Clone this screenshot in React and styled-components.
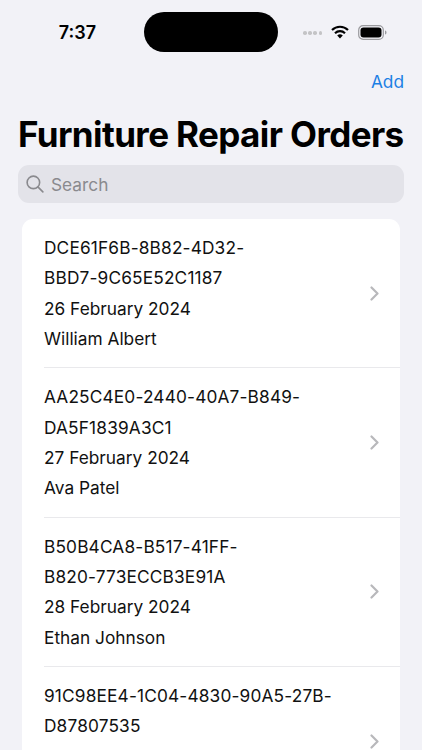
import React from 'react';
import styled, { createGlobalStyle } from 'styled-components';

const orders = [
  { id: 'DCE61F6B-8B82-4D32-BBD7-9C65E52C1187', lines: ['DCE61F6B-8B82-4D32-', 'BBD7-9C65E52C1187'], date: '26 February 2024', name: 'William Albert' },
  { id: 'AA25C4E0-2440-40A7-B849-DA5F1839A3C1', lines: ['AA25C4E0-2440-40A7-B849-', 'DA5F1839A3C1'], date: '27 February 2024', name: 'Ava Patel' },
  { id: 'B50B4CA8-B517-41FF-B820-773ECCB3E91A', lines: ['B50B4CA8-B517-41FF-', 'B820-773ECCB3E91A'], date: '28 February 2024', name: 'Ethan Johnson' },
  { id: '91C98EE4-1C04-4830-90A5-27B-D87807535', lines: ['91C98EE4-1C04-4830-90A5-27B-', 'D87807535'], date: '29 February 2024', name: '' },
];

const GlobalStyle = createGlobalStyle`
  html, body {
    margin: 0;
    height: 100%;
    overflow: hidden;
    background: #f2f2f7;
    font-family: Inter, "Liberation Sans", sans-serif;
    color: #000;
  }
`;

const Screen = styled.div`
  height: 750px;
  overflow: hidden;
  background: #f2f2f7;
`;

const StatusBar = styled.div`
  height: 64px;
  display: grid;
  grid-template-columns: 144px 134px 1fr;
  align-items: center;
`;

const Clock = styled.div`
  font-size: 18px;
  font-weight: 600;
  text-align: right;
  padding-right: 48px;
`;

const Island = styled.div`
  width: 134px;
  height: 40px;
  background: #000;
  border-radius: 20px;
`;

const StatusIcons = styled.div`
  display: flex;
  align-items: center;
  padding-left: 25px;
  gap: 9px;
`;

const Signal = styled.div`
  display: flex;
  gap: 1.7px;
  margin-top: 2px;
`;

const SignalDot = styled.span`
  width: 3.5px;
  height: 3.5px;
  border-radius: 50%;
  background: #c4c4c6;
`;

const NavBar = styled.div`
  height: 48px;
  box-sizing: border-box;
  padding: 0 18px 14px 0;
  display: flex;
  justify-content: flex-end;
  align-items: center;
`;

const AddButton = styled.button`
  border: 0;
  padding: 0;
  background: none;
  font: inherit;
  font-size: 17.3px;
  color: #1c80e4;
`;

const Title = styled.h1`
  margin: 0;
  padding: 0 18px;
  font-size: 35px;
  line-height: 44px;
  font-weight: 700;
  letter-spacing: -0.6px;
  white-space: nowrap;
`;

const SearchBar = styled.div`
  margin: 9px 18px 0;
  height: 38px;
  display: flex;
  align-items: center;
  gap: 7px;
  padding-left: 8px;
  border-radius: 11px;
  background: #e3e3e9;
  color: #8a8a8e;
  font-size: 17.3px;
`;

const List = styled.ul`
  list-style: none;
  margin: 16px 22px 0;
  padding: 0;
  background: #fff;
  border-radius: 11px 11px 0 0;
`;

const Row = styled.li`
  margin-left: 22px;
  height: 149.4px;
  box-sizing: border-box;
  display: flex;
  align-items: flex-start;
  justify-content: space-between;
  border-bottom: 1px solid #e9e9ec;
  &:last-child {
    border-bottom: 0;
  }
`;

const Details = styled.div`
  padding-top: 14px;
  font-size: 17.3px;
  line-height: 30.3px;
  color: #111;
`;

const Line = styled.div`
  white-space: nowrap;
  min-height: 30.3px;
`;

const IdLine = styled(Line)`
  letter-spacing: 0.15px;
`;

const ChevronIcon = styled.svg`
  flex: none;
  align-self: center;
  margin-right: 21px;
  fill: none;
  stroke: #b8b8bb;
  stroke-width: 2.2;
  stroke-linecap: round;
  stroke-linejoin: round;
`;

function Wifi() {
  return (
    <svg width="18" height="14" viewBox="0 0 18 14" aria-hidden="true">
      <path d="M1 5a11.5 11.5 0 0 1 16 0" fill="none" stroke="#000" strokeWidth="2.2" />
      <path d="M4 8.2a7.2 7.2 0 0 1 10 0" fill="none" stroke="#000" strokeWidth="2.2" />
      <path d="M9 13.5 6.2 10.6a4 4 0 0 1 5.6 0z" fill="#000" />
    </svg>
  );
}

function Battery() {
  return (
    <svg width="29" height="15" viewBox="0 0 29 15" aria-hidden="true">
      <rect x="0.7" y="0.7" width="24.6" height="13.6" rx="4.4" fill="none" stroke="#9a9a9e" strokeWidth="1.2" />
      <rect x="2.5" y="2.5" width="21" height="10" rx="3" fill="#000" />
      <path d="M27 5.5c1 .3 1.5 1 1.5 2s-.5 1.7-1.5 2z" fill="#9a9a9e" />
    </svg>
  );
}

function SearchIcon() {
  return (
    <svg width="18" height="18" viewBox="0 0 19 19" fill="none" stroke="#8a8a8e" strokeWidth="1.7" strokeLinecap="round" aria-hidden="true">
      <circle cx="7.8" cy="7.8" r="6.6" />
      <path d="m12.8 12.8 5 5" />
    </svg>
  );
}

export default function App() {
  return (
    <Screen>
      <GlobalStyle />
      <StatusBar>
        <Clock>7:37</Clock>
        <Island />
        <StatusIcons>
          <Signal>
            {[0, 1, 2, 3].map((dot) => <SignalDot key={dot} />)}
          </Signal>
          <Wifi />
          <Battery />
        </StatusIcons>
      </StatusBar>
      <NavBar>
        <AddButton>Add</AddButton>
      </NavBar>
      <Title>Furniture Repair Orders</Title>
      <SearchBar>
        <SearchIcon />
        Search
      </SearchBar>
      <List>
        {orders.map((order) => (
          <Row key={order.id}>
            <Details>
              {order.lines.map((line) => <IdLine key={line}>{line}</IdLine>)}
              <Line>{order.date}</Line>
              <Line>{order.name}</Line>
            </Details>
            <ChevronIcon width="9" height="15" viewBox="0 0 9 15" aria-hidden="true">
              <path d="m1.5 1.5 6 6-6 6" />
            </ChevronIcon>
          </Row>
        ))}
      </List>
    </Screen>
  );
}
